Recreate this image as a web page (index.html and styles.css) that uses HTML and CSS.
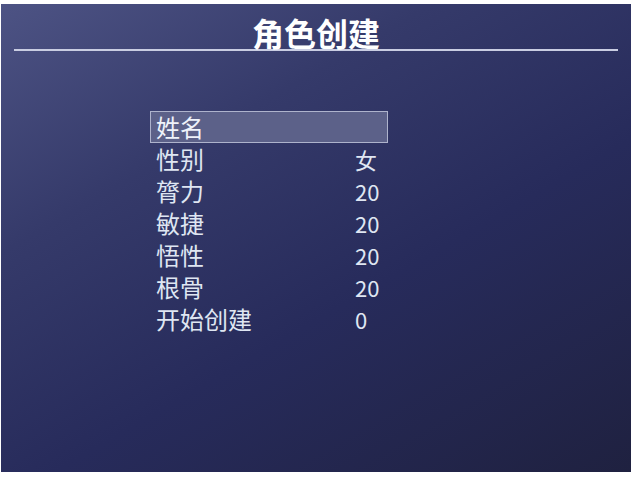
FILE: index.html
```html
<!DOCTYPE html>
<html lang="zh">
<head>
<meta charset="utf-8">
<title>角色创建</title>
<link rel="stylesheet" href="styles.css">
</head>
<body>
<div class="screen">
  <div class="header">
    <h1 class="title">角色创建</h1>
  </div>
  <ul class="menu">
    <li class="row selected"><span class="label">姓名</span><span class="value"></span></li>
    <li class="row"><span class="label">性别</span><span class="value">女</span></li>
    <li class="row"><span class="label">膂力</span><span class="value">20</span></li>
    <li class="row"><span class="label">敏捷</span><span class="value">20</span></li>
    <li class="row"><span class="label">悟性</span><span class="value">20</span></li>
    <li class="row"><span class="label">根骨</span><span class="value">20</span></li>
    <li class="row"><span class="label">开始创建</span><span class="value">0</span></li>
  </ul>
</div>
</body>
</html>
```
FILE: styles.css
```css
html, body {
  margin: 0;
  padding: 0;
  background: #ffffff;
}
body {
  padding: 4px 5px 5px 1px;
  font-family: "Noto Sans CJK SC", "Noto Sans", sans-serif;
}
.screen {
  width: 630px;
  height: 468px;
  background: linear-gradient(150deg, #4d5384 0%, #353a6a 30%, #272b5b 60%, #1f2140 100%);
  overflow: hidden;
  box-sizing: border-box;
  padding-top: 12px;
}
.header {
  margin: 0 13px;
  border-bottom: 2px solid #c9cde2;
  height: 33px;
  display: flex;
  justify-content: center;
}
.title {
  margin: 0;
  font-size: 32px;
  line-height: 32px;
  font-weight: 700;
  color: #ffffff;
}
.menu {
  list-style: none;
  margin: 60px 0 0 149px;
  padding: 0;
  width: 238px;
}
.row {
  display: flex;
  height: 32px;
  line-height: 32px;
  font-size: 24px;
  color: #dfe6f2;
  box-sizing: border-box;
  padding-left: 6px;
}
.row.selected {
  background: #5c6189;
  border: 1px solid #aeb3cc;
  padding-left: 5px;
  line-height: 30px;
  color: #eef2fa;
}
.label {
  width: 199px;
}
.value {
  font-size: 22px;
}
```
